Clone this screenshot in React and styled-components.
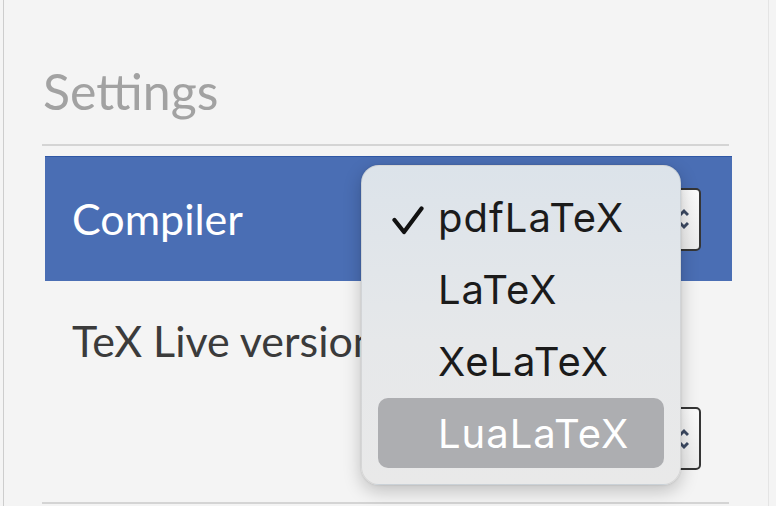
import React from 'react';
import styled, { createGlobalStyle } from 'styled-components';

const GlobalStyle = createGlobalStyle`
  html, body {
    margin: 0;
    padding: 0;
    background: #f4f4f4;
  }

  body {
    font-family: Lato, 'Open Sans', sans-serif;
    overflow: hidden;
  }
`;

const StyledPanel = styled.div`
  position: relative;
  box-sizing: border-box;
  margin-left: 3px;
  width: 766px;
  height: 506px;
  padding: 61px 38px 0 38px;
  border-left: 1px solid #cdcdcd;
  border-right: 1px solid #e4e4e4;
  background: #f4f4f4;
`;

const StyledHeading = styled.h2`
  margin: 0;
  padding-left: 1px;
  font-size: 50px;
  line-height: 60px;
  font-weight: 400;
  color: #a2a2a2;
`;

const StyledRule = styled.div`
  width: 687px;
  height: 2px;
  background: #d4d4d4;
  margin-top: ${props => props.$top || 0}px;
`;

const StyledSettingsList = styled.ul`
  list-style: none;
  margin: 10px 0 0 3px;
  padding: 0;
  width: 687px;
`;

const StyledRow = styled.li`
  box-sizing: border-box;
  display: flex;
  flex-direction: ${props => (props.$stacked ? 'column' : 'row')};
  align-items: ${props => (props.$stacked ? 'stretch' : 'center')};
  justify-content: ${props => (props.$stacked ? 'flex-start' : 'space-between')};
  height: ${props => props.$height}px;
  padding: ${props => (props.$stacked ? '33px 31px 0 27px' : '0 31px 0 27px')};
  background: ${props => (props.$active ? '#4a6eb4' : 'transparent')};
  border-top: 1px solid ${props => (props.$active ? '#2f57a5' : 'transparent')};
  color: ${props => (props.$active ? '#ffffff' : '#3b3b3b')};
`;

const StyledLabel = styled.span`
  font-size: 43px;
  line-height: 52px;
  white-space: nowrap;
`;

const StyledSelect = styled.div`
  box-sizing: border-box;
  display: flex;
  align-items: center;
  justify-content: flex-end;
  align-self: ${props => (props.$stacked ? 'flex-end' : 'auto')};
  margin-top: ${props => (props.$stacked ? 40 : 0)}px;
  width: 300px;
  height: 63px;
  padding-right: 10px;
  border: 2px solid #353535;
  border-radius: 5px;
  background: linear-gradient(#fbfbfb, #ececec);
`;

const StyledMenu = styled.ul`
  position: absolute;
  left: 357px;
  top: 165px;
  box-sizing: border-box;
  width: 320px;
  height: 320px;
  margin: 0;
  padding: 16px 16px 0 16px;
  list-style: none;
  border-radius: 18px;
  border: 1px solid rgba(0, 0, 0, 0.08);
  background: linear-gradient(#dce3ea, #e6e8ea 55%, #e9e9e9);
  box-shadow: 0 6px 18px rgba(0, 0, 0, 0.22), 0 0 2px rgba(0, 0, 0, 0.15);
  font-family: Inter, 'Open Sans', sans-serif;
`;

const StyledMenuItem = styled.li`
  position: relative;
  box-sizing: border-box;
  display: flex;
  align-items: center;
  height: 70px;
  margin-bottom: 2px;
  padding-left: 60px;
  border-radius: 10px;
  font-size: 40px;
  letter-spacing: 1px;
  color: ${props => (props.$hover ? '#ffffff' : '#1b1b1b')};
  background: ${props => (props.$hover ? '#adaeb1' : 'transparent')};
`;

const StyledCheck = styled.svg`
  position: absolute;
  left: 14px;
  top: 24px;
`;

const compilers = ['pdfLaTeX', 'LaTeX', 'XeLaTeX', 'LuaLaTeX'];

function Stepper() {
  return (
    <svg width="12" height="22" viewBox="0 0 12 22">
      <path d="M2 8 L7 3 L11 7" fill="none" stroke="#3d4a63" strokeWidth="3" />
      <path d="M2 14 L7 19 L11 15" fill="none" stroke="#3d4a63" strokeWidth="3" />
    </svg>
  );
}

function App() {
  const selected = 'pdfLaTeX';
  const hovered = 'LuaLaTeX';

  return (
    <>
      <GlobalStyle />
      <StyledPanel>
        <StyledHeading>Settings</StyledHeading>
        <StyledRule $top={23} />
        <StyledSettingsList>
          <StyledRow $active $height={125}>
            <StyledLabel>Compiler</StyledLabel>
            <StyledSelect>
              <Stepper />
            </StyledSelect>
          </StyledRow>
          <StyledRow $stacked $height={221}>
            <StyledLabel>TeX Live version</StyledLabel>
            <StyledSelect $stacked>
              <Stepper />
            </StyledSelect>
          </StyledRow>
        </StyledSettingsList>
        <StyledRule />

        <StyledMenu>
          {compilers.map(name => (
            <StyledMenuItem key={name} $hover={name === hovered}>
              {name === selected && (
                <StyledCheck width="32" height="30" viewBox="0 0 32 30">
                  <path
                    d="M2.5 14 L12 26 L29.5 2.5"
                    fill="none"
                    stroke="#111"
                    strokeWidth="4.2"
                    strokeLinecap="round"
                    strokeLinejoin="round"
                  />
                </StyledCheck>
              )}
              {name}
            </StyledMenuItem>
          ))}
        </StyledMenu>
      </StyledPanel>
    </>
  );
}

export default App;
